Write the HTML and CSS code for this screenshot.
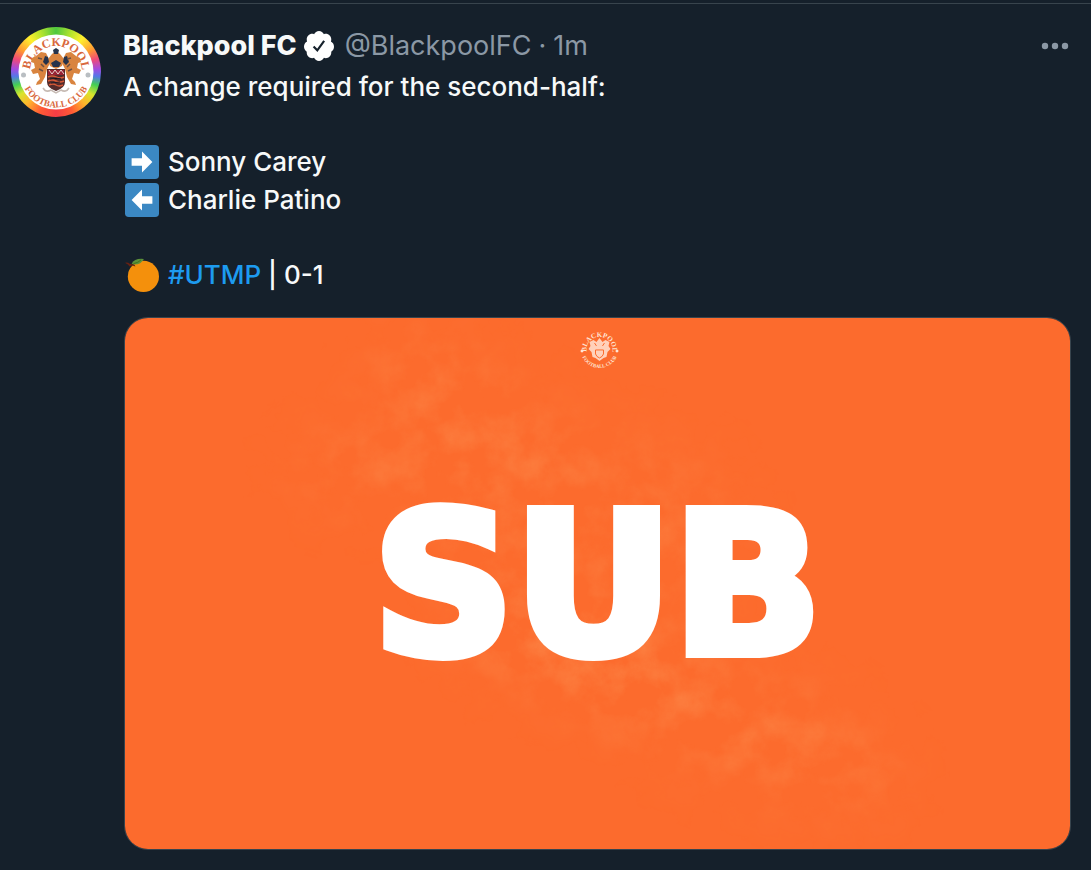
FILE: index.html
```html
<!DOCTYPE html>
<html lang="en">
<head>
<meta charset="utf-8">
<meta name="viewport" content="width=device-width, initial-scale=1">
<title>Blackpool FC</title>
<link rel="stylesheet" href="styles.css">
</head>
<body>
<article class="post">
  <a class="avatar" href="#" aria-label="Blackpool FC profile">
    <svg class="avatar-crest" viewBox="0 0 90 90" aria-hidden="true">
      <defs>
        <path id="arc-top" d="M19 45a26 26 0 0 1 52 0v4"/>
        <path id="arc-bottom" d="M9.5 45a35.500 35.500 0 0 0 71 0"/>
      </defs>
      <circle cx="45" cy="45" r="37.500" fill="#fff"/>
      <g class="crest-name" fill="#d9683c">
        <text font-size="12"><textPath href="#arc-top" startOffset="41" text-anchor="middle">BLACKPOOL</textPath></text>
        <text font-size="9"><textPath href="#arc-bottom" startOffset="50%" text-anchor="middle">FOOTBALL CLUB</textPath></text>
      </g>
      <circle cx="12.500" cy="48" r="2.500" fill="#b9bec2"/>
      <circle cx="77" cy="48" r="2.500" fill="#b9bec2"/>
      <g fill="#d9843f">
        <path d="M25 29l5-4 5 1 2 4 2 6-3 6-2 8-4 7-5 1 1-3 3-3-2-6-5 1-2-4 4-2-1-5-3-1 1-4z"/>
        <path d="M65 29l-5-4-5 1-2 4-2 6 3 6 2 8 4 7 5 1-1-3-3-3 2-6 5 1 2-4-4-2 1-5 3-1-1-4z"/>
        <path d="M37 32l4-5 4-3 4 3 4 5-2 7-6 3-6-3z"/>
      </g>
      <path d="M34 29l3 1 1 5-3 3-3-3zM56 29l-3 1-1 5 3 3 3-3zM42 23l3-2 3 2-1 4h-4zM40 36l5-3 5 3-2 4h-6z" fill="#26334b"/>
      <path d="M27 31l4 1M30 37l3 3M60 31l-4 1M59 37l-3 3M28 42l4 2M61 42l-4 2" stroke="#6c5042" stroke-width="1.500"/>
      <path d="M36 42h18v13q0 6-9 9-9-3-9-9z" fill="#542b2b"/>
      <path d="M37 43h16v5H37z" fill="#982234"/>
      <path d="M38 43l3 4 3-4 3 4 3-4 3 4" fill="none" stroke="#e9d7cf" stroke-width="1"/>
      <path d="M37 50q4-2 8 0t8 0M37 54q4-2 8 0t8 0M38 58q4-2 7 0t7 0" fill="none" stroke="#d85a38" stroke-width="1.500"/>
      <path d="M39 52l6-1 5 1M40 56l9-1" stroke="#211c27" stroke-width="1"/>
      <path d="M32 61q3 5 8 2l5 3 5-3q5 3 8-2" fill="none" stroke="#c6bab3" stroke-width="1.500"/>
    </svg>
  </a>

  <div class="post-main">
    <header class="post-head">
      <a class="name" href="#">Blackpool FC</a>
      <svg class="verified" viewBox="1.500 1.750 21 20.500" role="img" aria-label="Verified account"><path fill="#fff" d="M22.5 12.5c0-1.580-.875-2.950-2.148-3.600.154-.435.238-.905.238-1.400 0-2.210-1.710-3.998-3.818-3.998-.47 0-.92.084-1.336.25C14.818 2.415 13.510 1.500 12 1.500s-2.816.917-3.437 2.250c-.415-.165-.866-.25-1.336-.25-2.110 0-3.818 1.790-3.818 4 0 .494.083.964.237 1.400-1.272.65-2.147 2.018-2.147 3.600 0 1.495.782 2.798 1.942 3.486-.02.17-.032.34-.032.514 0 2.210 1.708 4 3.818 4 .47 0 .92-.086 1.335-.25.62 1.334 1.926 2.250 3.437 2.250 1.512 0 2.818-.916 3.437-2.250.415.163.865.248 1.336.248 2.110 0 3.818-1.790 3.818-4 0-.174-.012-.344-.033-.513 1.158-.687 1.943-1.990 1.943-3.484z"/><path d="M8.200 12.400l2.600 2.600 4.800-6.600" fill="none" stroke="#15202b" stroke-width="1.500"/></svg>
      <a class="muted handle" href="#">@BlackpoolFC</a>
      <span class="muted">·</span>
      <a class="muted" href="#">1m</a>
      <button class="more" type="button" aria-label="More">
        <svg viewBox="0 0 28 8" aria-hidden="true"><circle cx="4" cy="4" r="3.200"/><circle cx="14" cy="4" r="3.200"/><circle cx="24" cy="4" r="3.200"/></svg>
      </button>
    </header>

    <div class="post-text">
      <p>A change required for the second-half:</p>
      <p>
        <svg class="emoji" viewBox="0 0 36 36" role="img" aria-label="Right arrow"><rect width="36" height="36" rx="4" fill="#3b88c3"/><path d="M29 18L18 7v7H7v8h11v7z" fill="#fff"/></svg>
        Sonny Carey<br>
        <svg class="emoji" viewBox="0 0 36 36" role="img" aria-label="Left arrow"><rect width="36" height="36" rx="4" fill="#3b88c3"/><path d="M7 18L18 7v7h11v8H18v7z" fill="#fff"/></svg>
        Charlie Patino
      </p>
      <p>
        <svg class="emoji" viewBox="0 0 36 36" role="img" aria-label="Tangerine"><circle cx="19.500" cy="19.500" r="16.500" fill="#f4900c"/><path d="M0 5q3-1 5 1l5 1 1 2-3-1-3 1-2-2z" fill="#662113"/><path d="M7 6q3-6 13-5-3 6-10 6z" fill="#5c913b"/><path d="M9 6q5-1 8-4" fill="none" stroke="#3e721d"/></svg>
        <a class="tag" href="#">#UTMP</a> | 0-1
      </p>
    </div>

    <a class="media" href="#" aria-label="Substitution graphic">
      <svg viewBox="0 0 946 532" aria-hidden="true">
        <defs>
          <filter id="grain" x="0" y="0" width="100%" height="100%">
            <feTurbulence type="fractalNoise" baseFrequency=".03" numOctaves="7" seed="8"/>
            <feColorMatrix values="0 0 0 0 1  0 0 0 0 .57  0 0 0 0 .24  2 0 0 0 -.75"/>
          </filter>
          <filter id="soft" x="-60%" y="-100%" width="220%" height="300%"><feGaussianBlur stdDeviation="30"/></filter>
          <mask id="wear">
            <g filter="url(#soft)" fill="#fff">
              <ellipse cx="340" cy="90" rx="110" ry="55" transform="rotate(30 340 90)" opacity=".5"/>
              <ellipse cx="250" cy="150" rx="90" ry="38" opacity=".5"/>
              <ellipse cx="440" cy="335" rx="120" ry="38" transform="rotate(15 440 335)" opacity=".8"/>
              <ellipse cx="600" cy="400" rx="190" ry="60" transform="rotate(22 600 400)" opacity=".5"/>
              <ellipse cx="470" cy="210" rx="150" ry="100" opacity=".4"/>
            </g>
          </mask>
          <path id="mark-top" d="M462 32a13 13 0 0 1 26 0v3"/>
          <path id="mark-bottom" d="M456 31a19 19 0 0 0 38 0"/>
        </defs>
        <rect width="946" height="532" fill="#fc6b2d"/>
        <g mask="url(#wear)"><rect width="946" height="532" filter="url(#grain)" opacity=".35"/></g>
        <g class="crest-name" fill="#ffe3d3">
          <text font-size="7"><textPath href="#mark-top" startOffset="20.500" text-anchor="middle">BLACKPOOL</textPath></text>
          <text font-size="5"><textPath href="#mark-bottom" startOffset="50%" text-anchor="middle">FOOTBALL CLUB</textPath></text>
          <circle cx="457.500" cy="33" r="1.500"/>
          <circle cx="492.500" cy="33" r="1.500"/>
          <path d="M465 24l4-2 3 2 3-4 3 4 3-2 4 2-1 4 2 3-3 3-1 5-3 1-4 3-4-3-3-1-1-5-3-3 2-3z" opacity=".85"/>
        </g>
        <path d="M471 32h8v4q-1 3-4 4-3-1-4-4zM470 25l2 3M480 25l-2 3" fill="none" stroke="#fc6b2d"/>
        <text class="headline" x="473" y="335" text-anchor="middle">SUB</text>
      </svg>
    </a>
  </div>
</article>
</body>
</html>
```
FILE: styles.css
```css
* {
  box-sizing: border-box;
}

body {
  margin: 0;
  padding-top: 3px;
  background: #15202b;
  color: #f7f9f9;
  font: 27px/38px Inter, "Liberation Sans", sans-serif;
}

a {
  color: inherit;
  text-decoration: none;
}

svg {
  display: block;
}

.post {
  display: flex;
  gap: 22px;
  padding: 23px 20px 20px 11px;
  border-top: 1px solid #38444d;
}

.avatar {
  flex: none;
  width: 90px;
  height: 90px;
  border-radius: 50%;
  background: conic-gradient(#4fc83f 0deg, #b9e52c 22deg, #fff02d 38deg, #ff9a32 58deg, #f04a78 72deg, #a14be0 86deg, #5577e8 96deg, #43cf55 108deg, #d8e52c 122deg, #ffb52c 138deg, #ff5b35 158deg, #f43d45 180deg, #ff5b35 202deg, #ffb52c 222deg, #d8e52c 238deg, #43cf55 252deg, #5577e8 264deg, #a14be0 274deg, #f04a78 288deg, #ff9a32 302deg, #fff02d 322deg, #b9e52c 338deg, #4fc83f 360deg);
}

.crest-name {
  font-family: "Liberation Serif", serif;
  font-weight: 700;
}

.post-main {
  flex: 1;
  min-width: 0;
}

.post-head {
  display: flex;
  align-items: center;
  gap: 7px;
  height: 38px;
}

.name {
  font-weight: 800;
}

.verified {
  width: 30px;
  height: 30px;
}

.muted {
  color: #8b98a5;
}

.handle {
  margin-left: 4px;
}

.more {
  display: flex;
  align-items: center;
  height: 38px;
  margin-left: auto;
  padding: 0 2px;
  border: 0;
  background: none;
  color: #8b98a5;
}

.more svg {
  width: 28px;
  fill: currentColor;
}

.post-text {
  margin-top: 3px;
  font-size: 26px;
  font-weight: 500;
}

.post-text p {
  margin: 0 0 37px;
}

.post-text p:last-child {
  margin-bottom: 23px;
}

.emoji {
  display: inline-block;
  width: 34px;
  height: 34px;
  margin: 0 2px;
  vertical-align: -8px;
}

.tag {
  color: #1d9bf0;
}

.media {
  display: block;
  margin-left: 1px;
  overflow: hidden;
  border: 1px solid #38444d;
  border-radius: 24px;
}

.media svg {
  width: 100%;
  height: auto;
}

.headline {
  fill: #fff;
  stroke: #fff;
  stroke-width: 10px;
  font: 700 196px "DejaVu Sans", sans-serif;
}
```
